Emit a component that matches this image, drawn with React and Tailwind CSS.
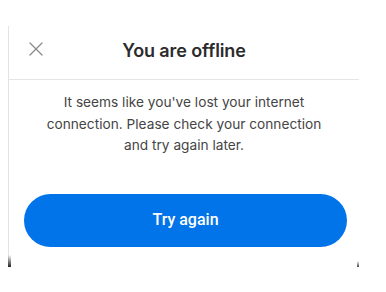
import React from 'react';

const CloseIcon = () => (
    <svg width="14" height="14" viewBox="0 0 14 14" fill="none" stroke="#8a8a8a" strokeWidth="1.3" strokeLinecap="round">
        <path d="M1 1L13 13M13 1L1 13" />
    </svg>
);

export default function App() {
    return (
        <div className="w-[386px] h-[292px] bg-white overflow-hidden" style={{ fontFamily: 'Inter, "Noto Sans", sans-serif' }}>
            <div className="relative ml-2 mt-[26px] w-[351px] h-[241px] border-l border-[#e3e3e3] bg-white">
                <div className="relative flex items-center justify-center h-[54px] pb-[5px] border-b border-[#e6e6e6]">
                    <button className="absolute left-[20px] top-[16px] p-0" aria-label="Close">
                        <CloseIcon />
                    </button>
                    <h1 className="text-[18px] font-semibold text-[#2b2b2b] tracking-[-0.1px]">You are offline</h1>
                </div>
                <p className="mt-[12px] px-4 text-center text-[13.7px] leading-[21.5px] text-[#454545]">
                    It seems like you've lost your internet<br />
                    connection. Please check your connection<br />
                    and try again later.
                </p>
                <div className="mt-[37px] pl-[15px] pr-[12px]">
                    <button
                        className="w-full h-[53px] rounded-full bg-[#0074e8] text-white text-[16px] font-medium"
                        style={{ fontFamily: 'Roboto, "Noto Sans", sans-serif' }}
                    >
                        Try again
                    </button>
                </div>
                <div className="absolute -left-px bottom-0 w-[3px] h-[12px] bg-gradient-to-b from-transparent to-[#222]"></div>
                <div className="absolute right-0 bottom-0 w-[2px] h-[6px] bg-gradient-to-b from-transparent to-[#444]"></div>
            </div>
        </div>
    );
}
